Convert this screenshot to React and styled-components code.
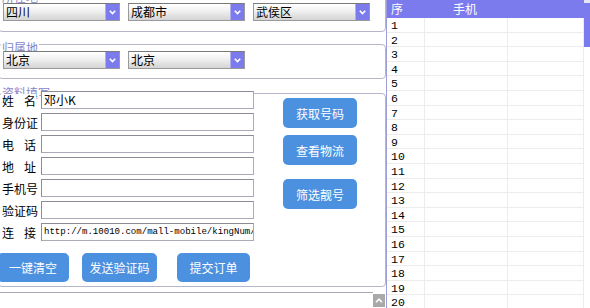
import React from "react";
import styled, { createGlobalStyle } from "styled-components";

const GlobalStyle = createGlobalStyle`
  html, body {
    margin: 0;
    padding: 0;
    background: #fff;
    overflow: hidden;
  }
  body {
    font-family: "Noto Sans CJK SC", "Liberation Sans", sans-serif;
    font-size: 12px;
    color: #000;
  }
`;

const Page = styled.div`
  display: flex;
  width: 590px;
  height: 308px;
  overflow: hidden;
`;

const LeftPane = styled.div`
  width: 386px;
  display: flex;
  flex-direction: column;
  flex: none;
`;

const GroupBox = styled.div`
  width: 388px;
  box-sizing: border-box;
  margin-left: -2px;
  margin-top: ${({ top }) => top}px;
  padding: ${({ pad }) => pad};
  border: 1px solid #b6b6cb;
  border-radius: 4px;
  display: flex;
  flex-direction: column;
`;

const Legend = styled.span`
  align-self: flex-start;
  height: 14px;
  line-height: 14px;
  margin: ${({ up }) => `-${up}px 0 -${14 - up}px 2px`};
  padding: 0 1px;
  background: #fff;
  color: #8585c6;
  font-size: 12px;
`;

const SelectRow = styled.div`
  display: flex;
  gap: 8px;
  margin-left: 4px;
`;

const SelectBox = styled.div`
  width: 117px;
  height: 18px;
  box-sizing: border-box;
  display: flex;
  border: 1px solid #9a9a9a;
  border-top-color: #7a7a7a;
  background: linear-gradient(#ffffff, #f2f2f2 40%, #d4d4d4);
`;

const SelectText = styled.span`
  flex: 1;
  line-height: 16px;
  padding-left: 2px;
  font-size: 12px;
`;

const SelectArrow = styled.span`
  width: 13px;
  background: #7b7bee;
  border-left: 1px solid #b0b0ea;
  display: flex;
  align-items: center;
  justify-content: center;
`;

const Select = ({ value }) => (
  <SelectBox>
    <SelectText>{value}</SelectText>
    <SelectArrow>
      <svg width="7" height="5" viewBox="0 0 7 5">
        <polyline points="0.8,0.8 3.5,3.6 6.2,0.8" fill="none" stroke="#fff" strokeWidth="1.6" />
      </svg>
    </SelectArrow>
  </SelectBox>
);

const FormArea = styled.div`
  display: flex;
  margin-top: -3px;
  margin-left: 3px;
`;

const Fields = styled.div`
  display: flex;
  flex-direction: column;
  gap: 4px;
`;

const FieldRow = styled.div`
  display: flex;
  align-items: center;
  height: 18px;
`;

const Label = styled.span`
  width: 34px;
  height: 18px;
  margin-right: 5px;
  display: flex;
  justify-content: space-between;
  font-size: 12px;
  line-height: 19px;
  background: linear-gradient(transparent 3px, #fff 3px);
`;

const Input = styled.div`
  width: 213px;
  height: 18px;
  box-sizing: border-box;
  border: 1px solid #ababb8;
  border-top-color: #8c8c94;
  border-left-color: #8c8c94;
  background: #fff;
  padding-left: 2px;
  line-height: 16px;
  font-size: ${({ mono }) => (mono ? "9.05px" : "12px")};
  font-family: ${({ mono }) =>
    mono ? `"Liberation Mono", monospace` : `"Noto Sans CJK SC", sans-serif`};
  white-space: nowrap;
  overflow: hidden;
`;

const SideButtons = styled.div`
  display: flex;
  flex-direction: column;
  margin-left: 29px;
  padding-top: 7px;
`;

const BlueButton = styled.div`
  width: ${({ w }) => w}px;
  height: ${({ h }) => h}px;
  margin-top: ${({ mt }) => mt || 0}px;
  margin-left: ${({ ml }) => ml || 0}px;
  background: #4c91df;
  color: #fff;
  border-radius: 5px;
  display: flex;
  align-items: center;
  justify-content: center;
  font-size: 12px;
  flex: none;
`;

const BottomButtons = styled.div`
  display: flex;
  margin-top: 12px;
  margin-left: -2px;
`;

const Footer = styled.div`
  margin-top: 5px;
  width: 373px;
  border-top: 1px solid #a8a8b0;
  display: flex;
  justify-content: flex-end;
`;

const ScrollBtn = styled.div`
  width: 12px;
  height: 13px;
  margin-top: 1px;
  margin-right: -12px;
  background: #a9a9a9;
  display: flex;
  align-items: center;
  justify-content: center;
`;

const Table = styled.div`
  flex: 1;
  display: flex;
  border-left: 1px solid #9e9ed6;
`;

const Grid = styled.div`
  flex: 1;
  display: flex;
  flex-direction: column;
`;

const HeadRow = styled.div`
  display: flex;
  height: 18px;
  background: #7b7bee;
  color: #fff;
  font-size: 12px;
  line-height: 18px;
  flex: none;
`;

const Row = styled.div`
  display: flex;
  height: 14.6px;
  box-sizing: border-box;
  border-bottom: 1px solid #ececec;
  flex: none;
`;

const Cell = styled.div`
  width: ${({ w }) => (w ? `${w}px` : "auto")};
  flex: ${({ w }) => (w ? "none" : 1)};
  box-sizing: border-box;
  padding-left: ${({ pl }) => pl || 4}px;
  border-right: ${({ head }) => (head ? "none" : "1px solid #ececec")};
  font-family: ${({ head }) =>
    head ? `"Noto Sans CJK SC", sans-serif` : `"Liberation Mono", monospace`};
  font-size: ${({ head }) => (head ? 12 : 11.5)}px;
  line-height: ${({ head }) => (head ? 18 : 15)}px;
`;

const VScroll = styled.div`
  width: 6px;
  display: flex;
  flex-direction: column;
  background: #fff;
`;

const ScrollCap = styled.div`
  height: 3px;
  background: #e6e6f6;
`;

const ScrollThumb = styled.div`
  height: 44px;
  background: #7b7bee;
`;

const fields = [
  { label: ["姓", "名"], value: "邓小K" },
  { label: ["身", "份", "证"] },
  { label: ["电", "话"] },
  { label: ["地", "址"] },
  { label: ["手", "机", "号"] },
  { label: ["验", "证", "码"] },
  { label: ["连", "接"], value: "http://m.10010.com/mall-mobile/kingNum/init", mono: true },
];

const rows = Array.from({ length: 20 }, (_, i) => i + 1);

export default function App() {
  return (
    <>
      <GlobalStyle />
      <Page>
        <LeftPane>
          <GroupBox top={-5} pad="7px 0 10px 0">
            <Legend up={13}>所在地</Legend>
            <SelectRow>
              <Select value="四川" />
              <Select value="成都市" />
              <Select value="武侯区" />
            </SelectRow>
          </GroupBox>

          <GroupBox top={12} pad="6px 0 9px 0">
            <Legend up={10}>归属地</Legend>
            <SelectRow>
              <Select value="北京" />
              <Select value="北京" />
            </SelectRow>
          </GroupBox>

          <GroupBox top={14} pad="0 0 4px 0">
            <Legend up={8}>资料填写</Legend>
            <FormArea>
              <Fields>
                {fields.map((f, i) => (
                  <FieldRow key={i}>
                    <Label>
                      {f.label.map((c, j) => (
                        <span key={j}>{c}</span>
                      ))}
                    </Label>
                    <Input mono={f.mono}>{f.value}</Input>
                  </FieldRow>
                ))}
              </Fields>
              <SideButtons>
                <BlueButton w={74} h={30}>获取号码</BlueButton>
                <BlueButton w={74} h={30} mt={7}>查看物流</BlueButton>
                <BlueButton w={74} h={30} mt={14}>筛选靓号</BlueButton>
              </SideButtons>
            </FormArea>
            <BottomButtons>
              <BlueButton w={72} h={29}>一键清空</BlueButton>
              <BlueButton w={75} h={29} ml={13}>发送验证码</BlueButton>
              <BlueButton w={73} h={29} ml={20}>提交订单</BlueButton>
            </BottomButtons>
          </GroupBox>

          <Footer>
            <ScrollBtn>
              <svg width="8" height="5" viewBox="0 0 8 5">
                <polyline points="1,4.2 4,1.2 7,4.2" fill="none" stroke="#fff" strokeWidth="1.6" />
              </svg>
            </ScrollBtn>
          </Footer>
        </LeftPane>

        <Table>
          <Grid>
            <HeadRow>
              <Cell head w={38} pl={4}>序</Cell>
              <Cell head w={83} pl={28}>手机</Cell>
              <Cell head />
            </HeadRow>
            {rows.map((n) => (
              <Row key={n}>
                <Cell w={38}>{n}</Cell>
                <Cell w={83} />
                <Cell />
              </Row>
            ))}
          </Grid>
          <VScroll>
            <ScrollCap />
            <ScrollThumb />
          </VScroll>
        </Table>
      </Page>
    </>
  );
}
